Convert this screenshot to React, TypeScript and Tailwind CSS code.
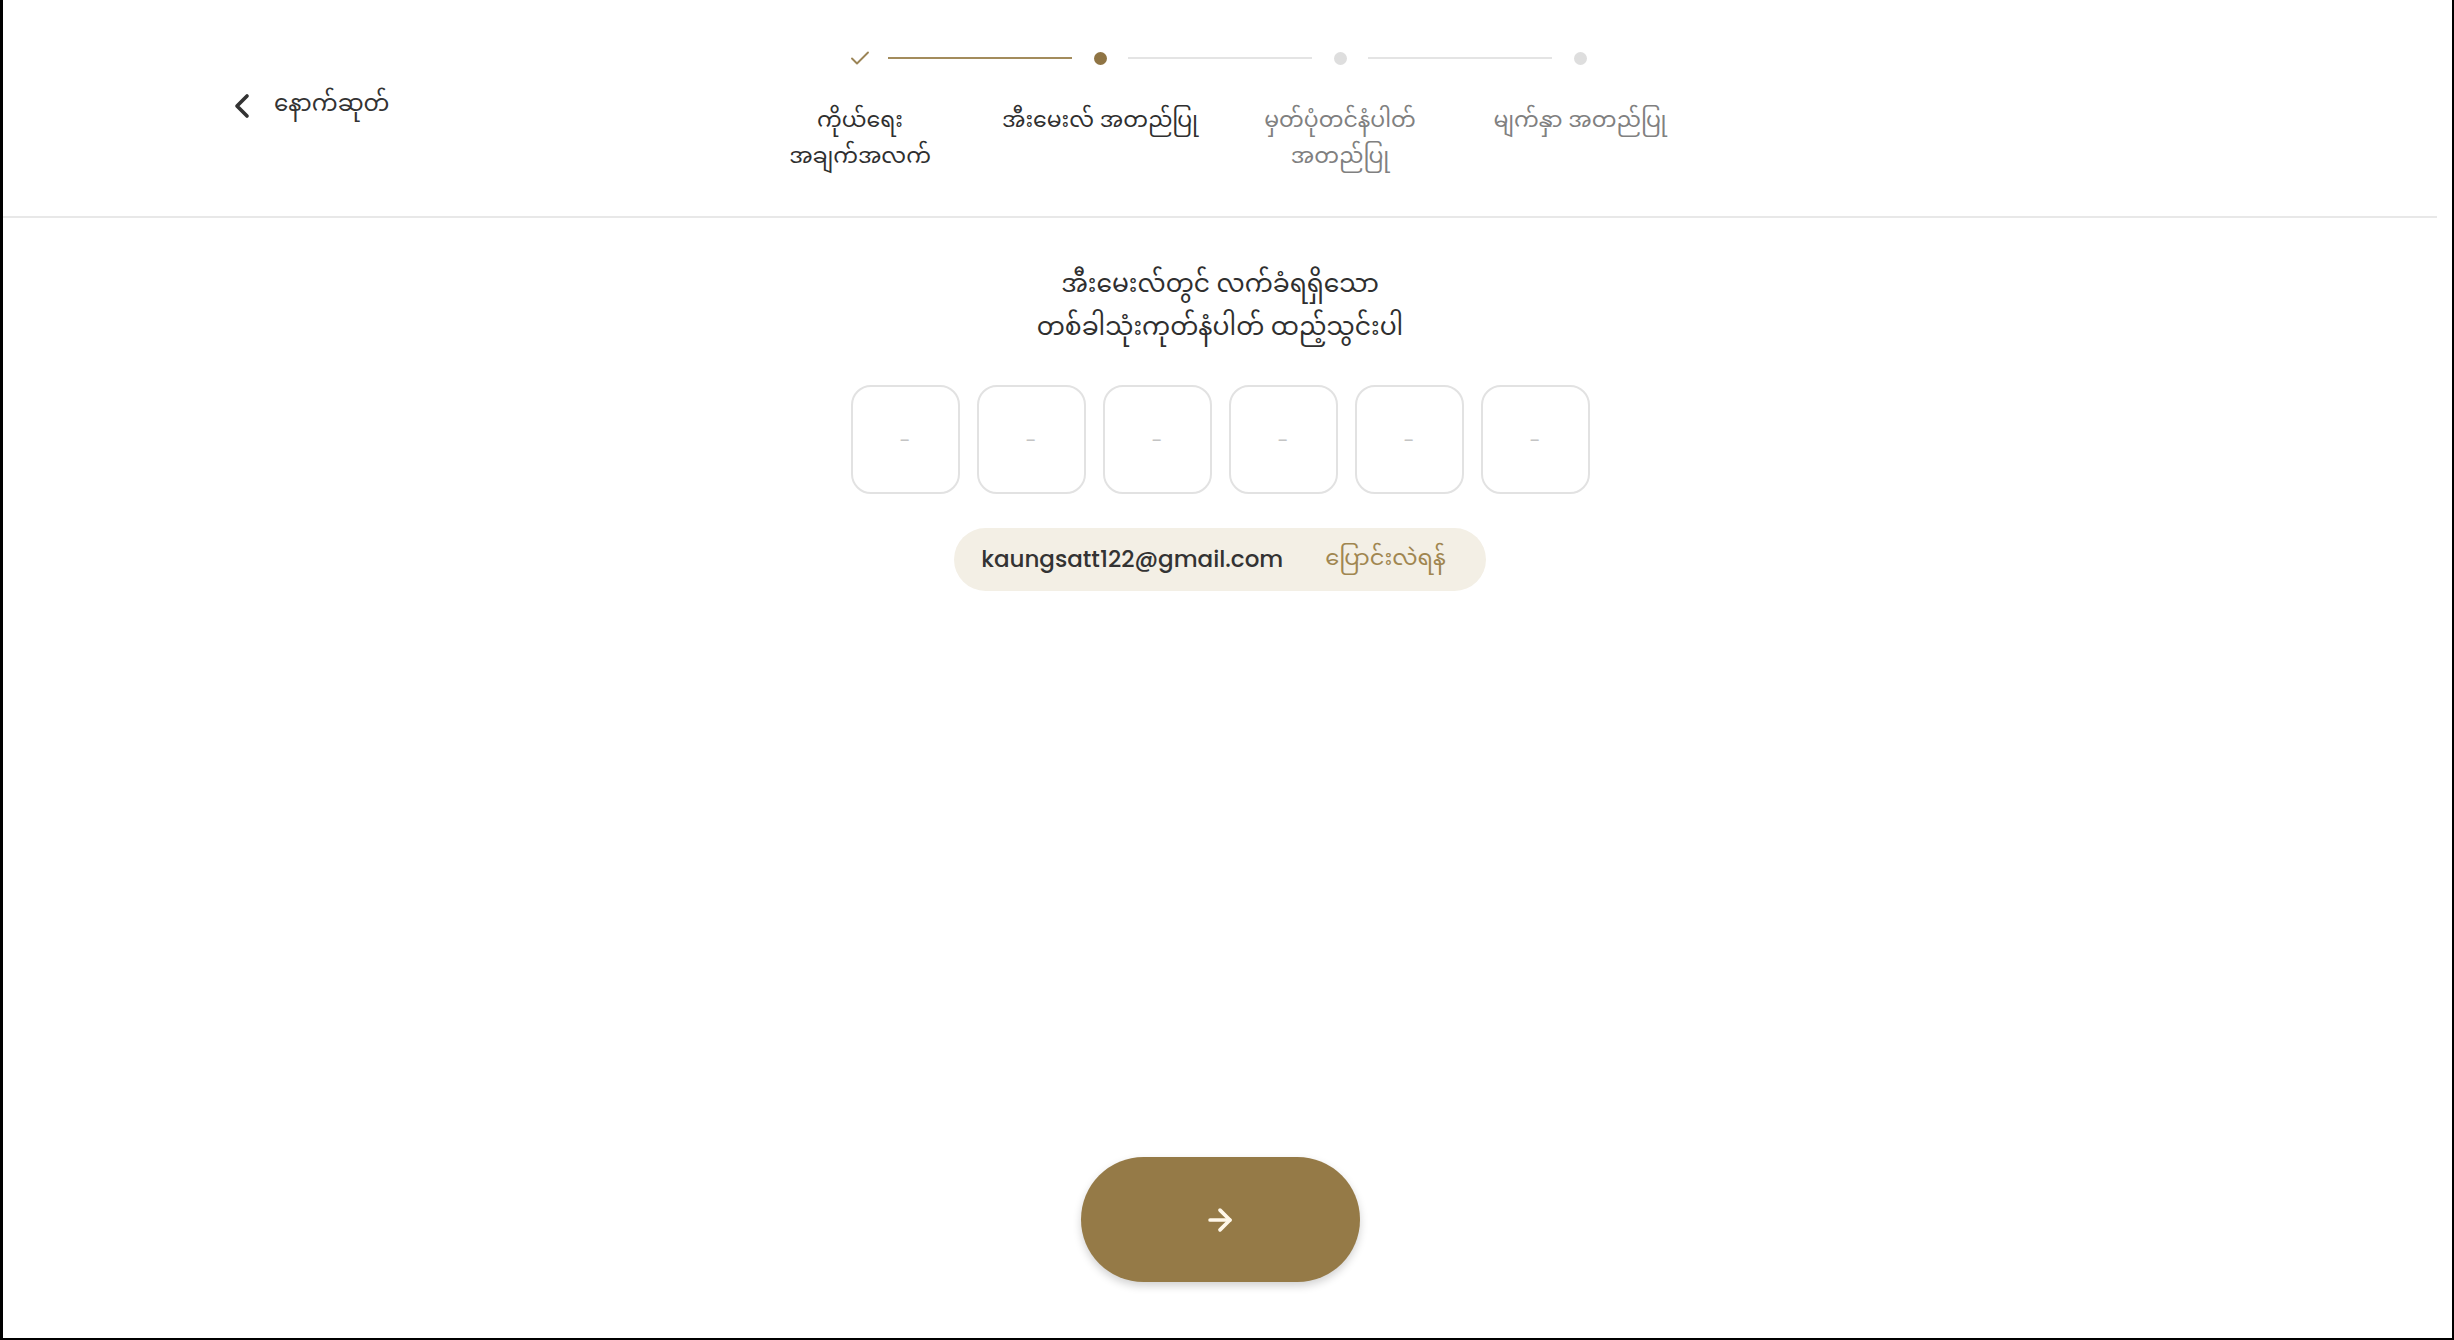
import React, { useState } from "react";
import { ArrowRight, Check, ChevronLeft } from "lucide-react";

const mm = { fontFamily: '"Noto Sans Myanmar", "Padauk", "Myanmar Text", "Noto Sans", sans-serif' };
const latin = { fontFamily: 'Poppins, "Lato", "Noto Sans", sans-serif' };

const steps = [
  { label: ["ကိုယ်ရေး", "အချက်အလက်"], state: "done" },
  { label: ["အီးမေးလ် အတည်ပြု"], state: "active" },
  { label: ["မှတ်ပုံတင်နံပါတ်", "အတည်ပြု"], state: "todo" },
  { label: ["မျက်နှာ အတည်ပြု"], state: "todo" },
];

const Marker: React.FC<{ state: string }> = ({ state }) => {
  if (state === "done") {
    return (
      <div className="w-[24px] h-[24px] flex items-center justify-center">
        <Check size={27} strokeWidth={1.9} className="text-[#9b8456]" />
      </div>
    );
  }
  return (
    <div className="w-[24px] h-[24px] flex items-center justify-center">
      <div className={state === "active" ? "w-[13px] h-[13px] rounded-full bg-[#8f7444]" : "w-[13px] h-[13px] rounded-full bg-[#dedede]"} />
    </div>
  );
};

// stepper at the top of the header
const Stepper: React.FC = () => (
  <div className="w-[960px] pt-[46px]">
    <div className="flex items-center px-[108px]">
      {steps.map((s, i) => (
        <React.Fragment key={i}>
          <Marker state={s.state} />
          {i < steps.length - 1 && (
            <div className={i === 0 ? "w-[184px] mx-[16px] h-[2px] bg-[#a38c5c]" : "w-[184px] mx-[16px] h-[2px] bg-[#e4e4e4]"} />
          )}
        </React.Fragment>
      ))}
    </div>
    <div className="grid grid-cols-4 mt-[34px]">
      {steps.map((s, i) => (
        <div
          key={i}
          style={mm}
          className={
            s.state === "todo"
              ? "text-center text-[22px] leading-[36px] text-[#808080]"
              : "text-center text-[22px] leading-[36px] text-[#2f2f2f]"
          }
        >
          {s.label.map((l, j) => (
            <div key={j}>{l}</div>
          ))}
        </div>
      ))}
    </div>
  </div>
);

const App: React.FC = () => {
  const [code] = useState<string[]>(["", "", "", "", "", ""]);

  return (
    <div className="min-h-screen w-full bg-black pl-[3px] pr-[2px] pb-[2px]">
      <div className="h-[1338px] bg-white flex flex-col pr-[15px]">
        <header className="h-[218px] border-b-2 border-[#e8e8e8] grid grid-cols-[1fr_auto_1fr]">
          <div className="pl-[219px] pt-[86px]">
            <button className="flex items-center gap-[12px] text-[#333]">
              <ChevronLeft size={40} strokeWidth={2.2} />
              <span style={mm} className="text-[23px] leading-[30px]">
                နောက်ဆုတ်
              </span>
            </button>
          </div>
          <Stepper />
          <div />
        </header>

        <main className="flex-1 flex flex-col items-center">
          <h1 style={mm} className="mt-[47px] text-center text-[25px] leading-[43px] text-[#2f2f2f] font-normal">
            <div>အီးမေးလ်တွင် လက်ခံရရှိသော</div>
            <div>တစ်ခါသုံးကုတ်နံပါတ် ထည့်သွင်းပါ</div>
          </h1>

          <div className="mt-[34px] flex gap-[17px]">
            {code.map((c, i) => (
              <div
                key={i}
                className="w-[109px] h-[109px] rounded-[20px] border-2 border-[#e2e2e2] flex items-center justify-center text-[#c4c4c4] text-[20px]"
                style={latin}
              >
                {c || "-"}
              </div>
            ))}
          </div>

          <div className="mt-[34px] h-[63px] pl-[27px] pr-[40px] rounded-full bg-[#f3efe5] flex items-center gap-[42px]">
            <span style={latin} className="text-[23px] font-medium text-[#333]">
              kaungsatt122@gmail.com
            </span>
            <span style={mm} className="text-[22.5px] text-[#a08650]">
              ပြောင်းလဲရန်
            </span>
          </div>

          <div className="flex-1" />

          <button className="mb-[56px] w-[279px] h-[125px] rounded-full bg-[#957a47] shadow-[0_4px_8px_rgba(0,0,0,0.18)] flex items-center justify-center">
            <ArrowRight size={34} strokeWidth={2.6} className="text-[#fff8ea]" />
          </button>
        </main>
      </div>
    </div>
  );
};

export default App;
